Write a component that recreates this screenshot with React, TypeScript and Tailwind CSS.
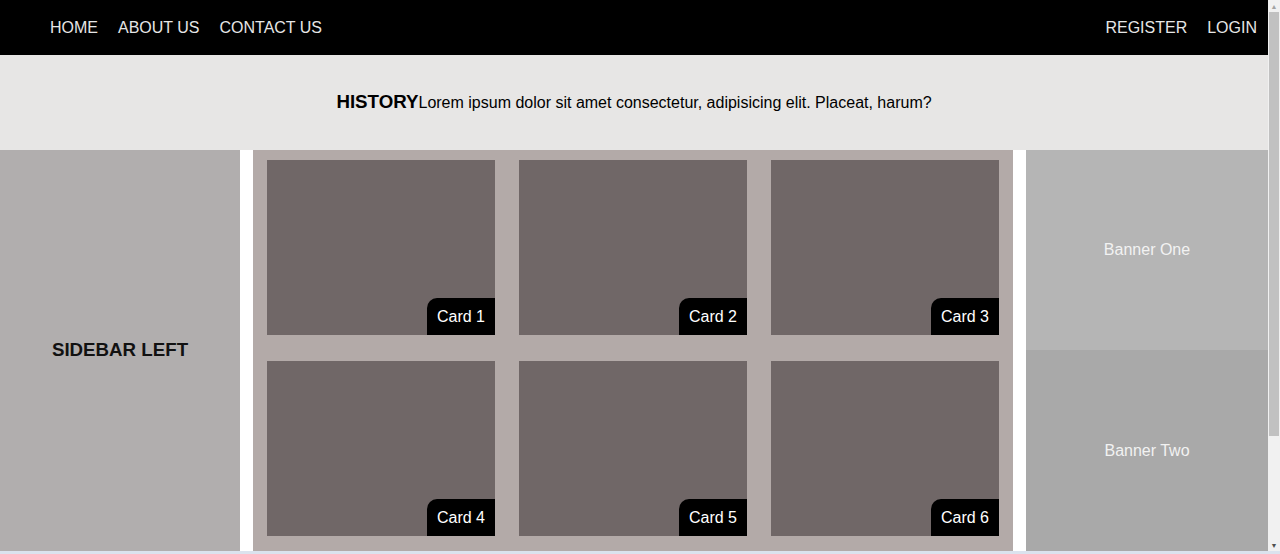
import React from "react";

const cards = ["Card 1", "Card 2", "Card 3", "Card 4", "Card 5", "Card 6"];

const Navbar: React.FC = () => {
  return (
    <nav className="flex h-[55px] items-center justify-between bg-black pl-[50px] pr-[11px] text-[16px] text-[#e6e6e6]">
      <ul className="flex gap-5">
        <li>HOME</li>
        <li>ABOUT US</li>
        <li>CONTACT US</li>
      </ul>
      <ul className="flex gap-5">
        <li>REGISTER</li>
        <li>LOGIN</li>
      </ul>
    </nav>
  );
};

const Card: React.FC<{ name: string }> = ({ name }) => {
  return (
    <div className="flex items-end justify-end bg-[#706767]">
      <span className="rounded-tl-[10px] bg-black px-[10px] py-[9px] text-[16px] leading-[19px] text-white">
        {name}
      </span>
    </div>
  );
};

const Scrollbar: React.FC = () => {
  return (
    <div className="flex w-[12px] flex-col bg-[#f1f1f1]">
      <div className="flex h-[12px] items-center justify-center text-[7px] leading-none text-[#a3a3a3]">▲</div>
      <div className="mx-[1px] h-[424px] bg-[#c1c1c1]" />
      <div className="flex-1" />
      <div className="flex h-[12px] items-center justify-center text-[7px] leading-none text-[#505050]">▼</div>
    </div>
  );
};

const App: React.FC = () => {
  return (
    <div className="flex h-[554px] w-[1280px] flex-col overflow-hidden bg-white font-['Liberation_Sans',Arial,sans-serif]">
      <div className="flex h-[551px]">
        <div className="flex flex-1 flex-col">
          <Navbar />
          <header className="flex h-[95px] items-center justify-center bg-[#e7e6e5] text-black">
            <h3 className="text-[18.72px] font-bold">HISTORY</h3>
            <p className="text-[16px]">
              Lorem ipsum dolor sit amet consectetur, adipisicing elit. Placeat, harum?
            </p>
          </header>
          <main className="flex flex-1">
            <aside className="flex w-[240px] items-center justify-center bg-[#b1aeae]">
              <h3 className="text-[18.72px] font-bold text-[#111]">SIDEBAR LEFT</h3>
            </aside>
            <div className="w-[13px] bg-white" />
            <section className="grid w-[760px] grid-cols-3 grid-rows-[175px_175px] gap-x-6 gap-y-[26px] bg-[#b3aaa8] px-[14px] pt-[10px]">
              {cards.map((c) => (
                <Card key={c} name={c} />
              ))}
            </section>
            <div className="w-[13px] bg-white" />
            <aside className="flex flex-1 flex-col text-[16px] text-[#f2f2f2]">
              <div className="flex h-[200px] items-center justify-center bg-[#b5b5b5]">Banner One</div>
              <div className="flex flex-1 items-center justify-center bg-[#a9a9a9]">Banner Two</div>
            </aside>
          </main>
        </div>
        <Scrollbar />
      </div>
      <div className="h-[3px] bg-[#dbe3ee]" />
    </div>
  );
};

export default App;
